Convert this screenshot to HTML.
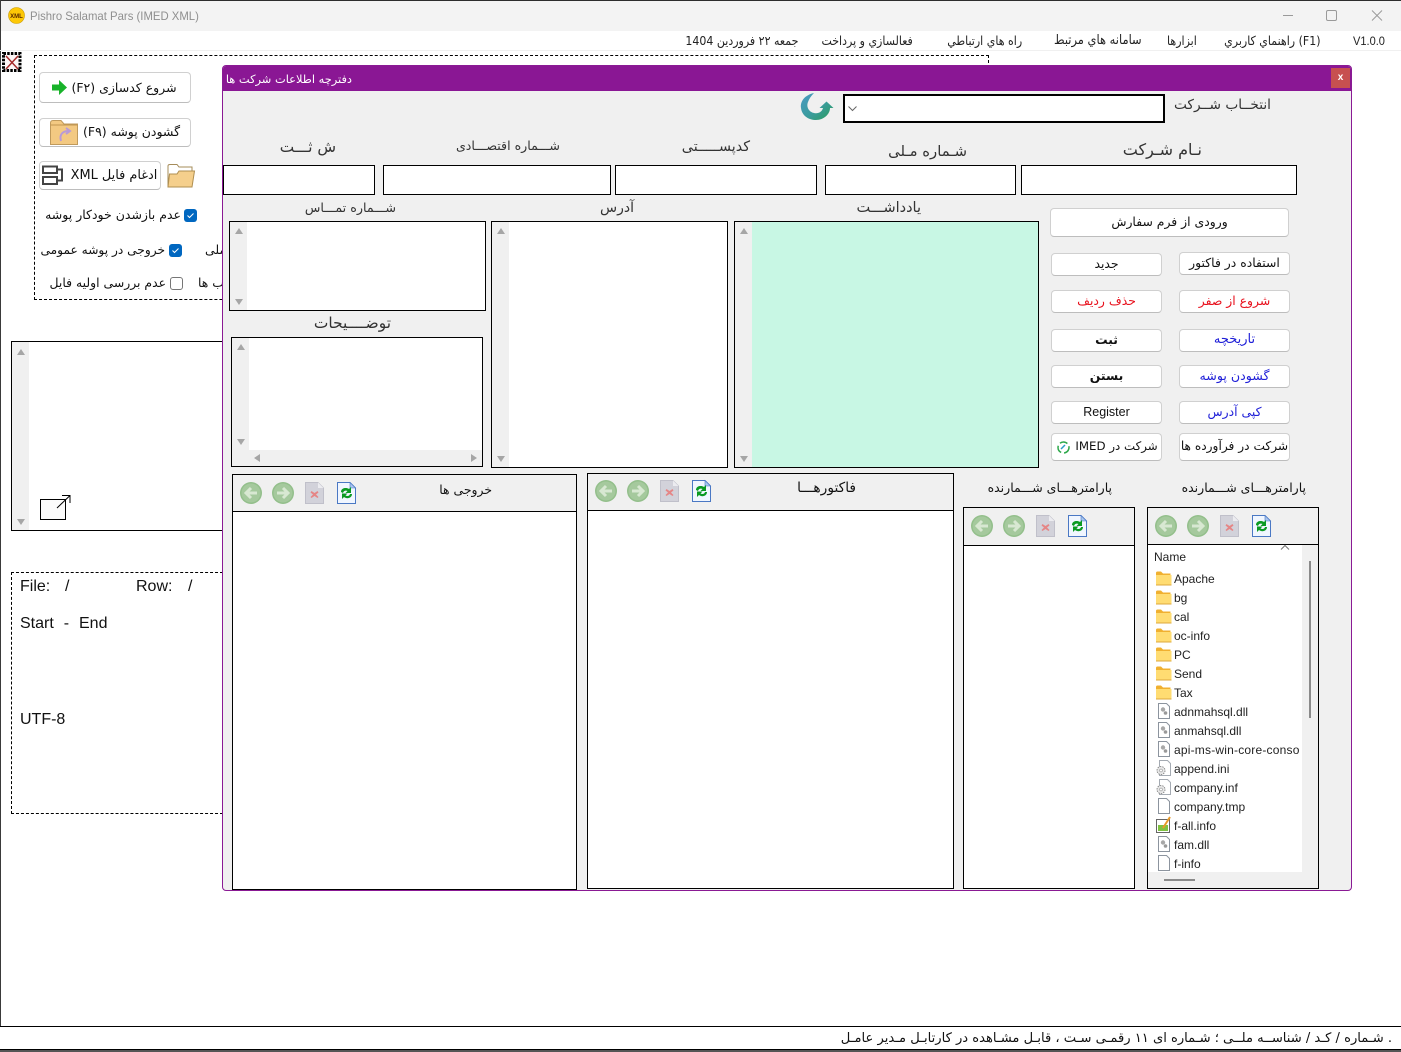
<!DOCTYPE html>
<html lang="fa"><head><meta charset="utf-8"><title>Pishro Salamat Pars</title>
<style>
html,body{margin:0;padding:0;width:1401px;height:1052px;overflow:hidden;background:#fff}
body{position:relative;font-family:"DejaVu Sans","Liberation Sans",sans-serif;color:#111}
.a{position:absolute;box-sizing:border-box}
.t{position:absolute;white-space:nowrap;line-height:16px;height:16px;direction:rtl;transform:translateY(-8px)}
.l{position:absolute;white-space:nowrap;line-height:16px;height:16px;font-family:"Liberation Sans",sans-serif;transform:translateY(-8px)}
.box{position:absolute;box-sizing:border-box;background:#fff;border:1px solid #000}
.sb{position:absolute;left:0;top:0;bottom:0;width:17px;background:#f0f0f0}
.btn{position:absolute;box-sizing:border-box;background:#fff;border:1px solid #d0d0d0;border-bottom-color:#bdbdbd;border-radius:4px;display:flex;align-items:center;justify-content:center;font-size:12.4px;direction:rtl;white-space:nowrap;color:#111;padding-bottom:2px}
.up,.dn,.lf,.rt{position:absolute;width:0;height:0}
.up{border-left:4px solid transparent;border-right:4px solid transparent;border-bottom:6px solid #a6a6a6}
.dn{border-left:4px solid transparent;border-right:4px solid transparent;border-top:6px solid #a6a6a6}
.lf{border-top:4px solid transparent;border-bottom:4px solid transparent;border-right:6px solid #a6a6a6}
.rt{border-top:4px solid transparent;border-bottom:4px solid transparent;border-left:6px solid #a6a6a6}
.f{position:absolute;left:1174px;font:12px/16px "Liberation Sans",sans-serif;color:#222;white-space:nowrap;transform:translateY(-7px)}
svg{position:absolute;overflow:visible}
.lab{color:#333}
.m{font-size:12.5px;color:#222;transform-origin:right center;transform:translateY(-8px) scaleX(.88)}
</style></head><body>
<svg width="0" height="0" style="left:0;top:0"><defs>
<g id="back"><circle cx="11" cy="11" r="11" fill="#93bf8b"/><circle cx="11" cy="11" r="9.500" fill="#a5c99d"/><path d="M17 11H6.500M11 6 6 11 11 16" fill="none" stroke="#d8e8d2" stroke-width="3"/></g>
<g id="fwd"><circle cx="11" cy="11" r="11" fill="#93bf8b"/><circle cx="11" cy="11" r="9.500" fill="#a5c99d"/><path d="M5 11H15.500M11 6 16 11 11 16" fill="none" stroke="#d8e8d2" stroke-width="3"/></g>
<g id="del"><path d="M.5.500H13L18.500 6V21.500H.5Z" fill="#d2d2da" stroke="#c0c0ca"/><path d="M13 .5V6H18.500Z" fill="#ececf0"/><path d="M6.500 9 9.500 11 12.500 9 13.500 10.500 11 12.500 13.500 15 12.500 16 9.500 14 6.500 16 5.500 15 8 12.500 5.500 10.500Z" fill="#e58686"/></g>
<g id="ref"><path d="M.5.500H13L18.500 6V21.500H.5Z" fill="#f0f6ff" stroke="#4a78c4"/><path d="M13 .5V6H18.500Z" fill="#a8c6ee" stroke="#4a78c4" stroke-width=".6"/><path d="M4 10C4 6 9 5 12 7L14 5V11H8.500L10.500 9C8.500 8 6.500 9 6 11Z" fill="#0a9a22"/><path d="M15 12C15 16 10 17.500 7 15L5 17V11.500H10.500L8.500 13.500C10.500 14.500 12.500 14 13 12Z" fill="#0a9a22"/></g>
<g id="fo"><path d="M1 2Q1 .5 2.500 .5H6L8 2.500H15.500V13H1Z" fill="#f0b030"/><path d="M1 4H16.500V14H1Z" fill="#ffdc72"/><path d="M1 14H16.500" stroke="#dca93e"/></g>
<g id="dll"><path d="M3.500.5H11.500L14.500 3.500V15.500H3.500Z" fill="#fff" stroke="#8c949e"/><circle cx="8" cy="6.500" r="2.200" fill="#a8a8a8"/><circle cx="10.500" cy="10" r="1.800" fill="#999"/></g>
<g id="ini"><path d="M4.500.5H12.500L15.500 3.500V15.500H4.500Z" fill="#fff" stroke="#a4aab2"/><circle cx="6" cy="10.500" r="4" fill="#e8e8e8" stroke="#8a8a8a" stroke-dasharray="1.500 1"/><circle cx="6" cy="10.500" r="1.400" fill="#fff" stroke="#999" stroke-width=".6"/></g>
<g id="tmp"><path d="M3.500.5H11.500L14.500 3.500V15.500H3.500Z" fill="#fff" stroke="#8c949e"/></g>
<linearGradient id="g" x1="0" y1="0" x2="1" y2="1"><stop offset="0" stop-color="#4a9ac4"/><stop offset=".55" stop-color="#3a9c9c"/><stop offset="1" stop-color="#2a9d58"/></linearGradient>
</defs></svg>

<!-- window chrome -->
<div class="a" style="left:0;top:0;width:1401px;height:31px;background:#f3f3f3;border-top:1px solid #2d2d2d"></div>
<div class="a" style="left:0;top:0;width:1px;height:1052px;background:#3a3a3a"></div>
<div class="a" style="left:0;top:1050px;width:1401px;height:2px;background:#555"></div>
<svg style="left:8px;top:7px" width="17" height="17"><circle cx="8.500" cy="8.500" r="8" fill="#fdc806" stroke="#c89a00" stroke-width=".6"/><text x="8.500" y="11" text-anchor="middle" font-size="6" font-family="Liberation Sans" fill="#5a2a00" font-weight="bold">XML</text></svg>
<div class="l" style="left:30px;top:16px;font-size:12px;color:#8f8f8f;transform-origin:left center;transform:translateY(-8px) scaleX(.945)">Pishro Salamat Pars (IMED XML)</div>
<svg style="left:1283px;top:10px" width="100" height="12"><path d="M0 5.500H10" stroke="#9a9a9a"/><rect x="43.500" y=".5" width="10" height="10" rx="1.500" fill="none" stroke="#9a9a9a"/><path d="M89 .5 99 10.500M99 .5 89 10.500" stroke="#9a9a9a"/></svg>
<div class="a" style="left:0;top:50px;width:1401px;height:1px;background:#f0f0f0"></div>

<!-- menu -->
<div class="l" style="left:1353px;top:41px;font-size:12px;color:#222;transform-origin:left center;transform:translateY(-8px) scaleX(.92)">V1.0.0</div>
<div class="t m" style="right:80px;top:41px">(F1) راهنماي كاربري</div>
<div class="t m" style="right:204px;top:41px">ابزارها</div>
<div class="t m" style="right:259px;top:41px;font-size:13px">سامانه هاي مرتبط</div>
<div class="t m" style="right:379px;top:41px">راه هاي ارتباطي</div>
<div class="t m" style="right:488px;top:41px">فعالسازي و پرداخت</div>
<div class="t m" style="right:603px;top:41px">جمعه ٢٢ فروردين 1404</div>

<!-- left panel -->
<svg style="left:2px;top:52px" width="20" height="20"><rect x="1.500" y="1.500" width="16.500" height="17" fill="#fdf6f6" stroke="#000" stroke-width="3" stroke-dasharray="2.500 1.200"/><path d="M4 4 16 17M16 4 4 17" stroke="#a52a2a" stroke-width="1.500"/></svg>
<div class="a" style="left:34px;top:55px;width:955px;height:245px;border:1px dashed #000"></div>
<div class="btn" style="left:39px;top:72px;width:152px;height:31px;font-size:12.500px;padding-left:18px;padding-bottom:1px">شروع کدسازی (F۲)</div>
<svg style="left:52px;top:80px" width="16" height="16"><path d="M0 4.500H7V0L15 7.500 7 15V10.500H0Z" fill="#18b32a"/></svg>
<div class="btn" style="left:39px;top:118px;width:152px;height:29px;font-size:12.500px;padding-left:33px">گشودن پوشه (F۹)</div>
<svg style="left:50px;top:120px" width="28" height="25"><path d="M.5 3Q.5.500 3 .5H11L14 4H27.500V24.500H.5Z" fill="#f3c982" stroke="#c09a5c"/><path d="M.5 5H27.500" stroke="#c09550"/><path d="M11 21C9 14 13 11 19 11M16 8 20 11 16 14" fill="none" stroke="#b99ad6" stroke-width="2"/></svg>
<div class="btn" style="left:39px;top:161px;width:122px;height:29px;font-size:12.900px;padding-left:28px;padding-bottom:0">ادغام فایل XML</div>
<svg style="left:42px;top:164px" width="22" height="23"><path d="M1 2.500H15V9H1ZM1 13H15V20H1ZM15 5.500H20V16.500H15" fill="none" stroke="#444" stroke-width="2"/></svg>
<svg style="left:167px;top:164px" width="28" height="24"><path d="M1 23V2Q1 .5 3 .5H10L12 3H25V23Z" fill="#fff" stroke="#a58c5a"/><path d="M1 23 2.500 10H10L12 7H27.500L25 23Z" fill="#f5cf8c" stroke="#b08f50"/></svg>

<div class="a" style="left:184px;top:209px;width:13px;height:13px;border-radius:3px;background:#0067c0"></div>
<svg style="left:184px;top:209px" width="13" height="13"><path d="M3.500 6.500 5.500 8.500 9.500 4.500" fill="none" stroke="#fff"/></svg>
<div class="t" style="right:1220px;top:215px;font-size:12.500px">عدم بازشدن خودکار پوشه</div>
<div class="a" style="left:169px;top:244px;width:13px;height:13px;border-radius:3px;background:#0067c0"></div>
<svg style="left:169px;top:244px" width="13" height="13"><path d="M3.500 6.500 5.500 8.500 9.500 4.500" fill="none" stroke="#fff"/></svg>
<div class="t" style="right:1236px;top:250px;font-size:12.200px">خروجی در پوشه عمومی</div>
<div class="t" style="left:205px;top:250px;font-size:12.400px;width:17px;overflow:hidden;direction:ltr">ملی</div>
<div class="a" style="left:170px;top:277px;width:13px;height:13px;border-radius:3px;background:#fff;border:1px solid #767676"></div>
<div class="t" style="right:1235px;top:283px;font-size:12.400px">عدم بررسی اولیه فایل</div>
<div class="t" style="left:198px;top:283px;font-size:12.400px;width:24px;overflow:hidden;direction:ltr">حساب ها</div>

<div class="box" style="left:11px;top:341px;width:212px;height:190px;border-width:1px"><div class="sb"></div><div class="up" style="left:5px;top:7px"></div><div class="dn" style="left:5px;bottom:5px"></div></div>
<svg style="left:40px;top:495px" width="32" height="26"><rect x=".5" y="4.500" width="25" height="20" fill="#fbfbfb" stroke="#000"/><path d="M17 13 29.500 1M22 .5H30V8" fill="none" stroke="#000"/></svg>

<div class="a" style="left:11px;top:572px;width:212px;height:242px;border:1px dashed #000"></div>
<div class="l" style="left:20px;top:587px;font-size:16px">File:</div><div class="l" style="left:65px;top:587px;font-size:16px">/</div>
<div class="l" style="left:136px;top:587px;font-size:16px">Row:</div><div class="l" style="left:188px;top:587px;font-size:16px">/</div>
<div class="l" style="left:20px;top:624px;font-size:16px;word-spacing:5.500px">Start - End</div>
<div class="l" style="left:20px;top:720px;font-size:16px">UTF-8</div>

<!-- modal -->
<div class="a" style="left:222px;top:65px;width:1130px;height:826px;background:#f0f0f0;border:1px solid #8a1a94;border-radius:4px;overflow:hidden"></div>
<div class="a" style="left:223px;top:66px;width:1128px;height:25px;background:#8a1794;border-radius:3px 3px 0 0"></div>
<div class="t" style="right:1049px;top:79px;font-size:11.400px;color:#fff">دفترچه اطلاعات شرکت ها</div>
<div class="a" style="left:1331px;top:68px;width:19px;height:20px;background:#c75050;color:#fff;font:bold 10px/20px 'Liberation Sans';text-align:center">x</div>

<svg style="left:800px;top:93px" width="34" height="29"><path d="M14 0C5 2 0 8 1 15 2 23 9 27 16 27 24 27 30 21 30 15H33.500L26.500 8.500 19.500 15H23C22 19 18 21 14 20 9 19 6 14 8 9 9 6 11 3 14 0Z" fill="url(#g)"/></svg>
<div class="a" style="left:843px;top:94px;width:322px;height:29px;background:#fff;border:2px solid #000"></div>
<svg style="left:848px;top:106px" width="9" height="6"><path d="M.5.500 4.500 4.500 8.500.5" fill="none" stroke="#666"/></svg>
<div class="t lab" style="right:130px;top:105px;font-size:13.700px">انتخــاب شــرکت</div>

<div class="t lab" style="right:199px;top:150px;font-size:16px">نـام شـرکت</div>
<div class="t lab" style="right:434px;top:152px;font-size:14.800px">شـماره مـلی</div>
<div class="t lab" style="right:651px;top:147px;font-size:14.300px">کدپســـــتی</div>
<div class="t lab" style="right:841px;top:146px;font-size:12.600px">شـــماره اقتصـــادی</div>
<div class="t lab" style="right:1065px;top:147px;font-size:15.300px">ش ثـــت</div>
<div class="box" style="left:1021px;top:165px;width:276px;height:30px"></div>
<div class="box" style="left:825px;top:165px;width:191px;height:30px"></div>
<div class="box" style="left:615px;top:165px;width:202px;height:30px"></div>
<div class="box" style="left:383px;top:165px;width:228px;height:30px"></div>
<div class="box" style="left:223px;top:165px;width:152px;height:30px"></div>

<div class="t lab" style="right:480px;top:208px;font-size:14.500px">یادداشـــت</div>
<div class="t lab" style="right:767px;top:208px;font-size:14px">آدرس</div>
<div class="t lab" style="right:1005px;top:208px;font-size:12.700px">شـــماره تمـــاس</div>
<div class="t lab" style="right:1010px;top:323px;font-size:15.400px">توضــــیحات</div>

<div class="box" style="left:734px;top:221px;width:305px;height:247px;background:#c8f7e4"><div class="sb"></div><div class="up" style="left:5px;top:6px"></div><div class="dn" style="left:5px;bottom:5px"></div></div>
<div class="box" style="left:491px;top:221px;width:237px;height:247px"><div class="sb"></div><div class="up" style="left:5px;top:6px"></div><div class="dn" style="left:5px;bottom:5px"></div></div>
<div class="box" style="left:229px;top:221px;width:257px;height:90px"><div class="sb"></div><div class="up" style="left:5px;top:6px"></div><div class="dn" style="left:5px;bottom:5px"></div></div>
<div class="box" style="left:231px;top:337px;width:252px;height:130px"><div class="sb"></div><div class="a" style="left:0;right:0;bottom:0;height:16px;background:#f0f0f0"></div><div class="up" style="left:5px;top:6px"></div><div class="dn" style="left:5px;bottom:21px"></div><div class="lf" style="left:22px;bottom:4px"></div><div class="rt" style="right:5px;bottom:4px"></div></div>

<!-- buttons -->
<div class="btn" style="left:1050px;top:208px;width:239px;height:29px">ورودی از فرم سفارش</div>
<div class="btn" style="left:1179px;top:252px;width:111px;height:23px">استفاده در فاکتور</div>
<div class="btn" style="left:1051px;top:253px;width:111px;height:23px">جدید</div>
<div class="btn" style="left:1179px;top:290px;width:111px;height:23px;color:#e8101c">شروع از صفر</div>
<div class="btn" style="left:1051px;top:290px;width:111px;height:23px;color:#e8101c">حذف ردیف</div>
<div class="btn" style="left:1179px;top:329px;width:111px;height:23px;color:#2020d8;font-size:13px">تاریخچه</div>
<div class="btn" style="left:1051px;top:329px;width:111px;height:23px;font-weight:bold">ثبت</div>
<div class="btn" style="left:1179px;top:365px;width:111px;height:23px;color:#2020d8;font-size:12.600px">گشودن پوشه</div>
<div class="btn" style="left:1051px;top:365px;width:111px;height:23px;font-weight:bold">بستن</div>
<div class="btn" style="left:1179px;top:401px;width:111px;height:23px;color:#2020d8">کپی آدرس</div>
<div class="btn" style="left:1051px;top:401px;width:111px;height:23px;font:12.500px 'Liberation Sans',sans-serif;direction:ltr">Register</div>
<div class="btn" style="left:1179px;top:433px;width:111px;height:28px;font-size:12.200px">شرکت در فرآورده ها</div>
<div class="btn" style="left:1051px;top:433px;width:111px;height:28px;padding-left:20px;font-size:11.800px">شرکت در IMED</div>
<svg style="left:1056px;top:440px" width="15" height="15"><circle cx="7.500" cy="7.500" r="5.500" fill="none" stroke="#2da84a" stroke-width="1.500" stroke-dasharray="8 3"/><path d="M5 9 9 5" stroke="#2a9dc4" stroke-width="1.500"/></svg>

<!-- panels -->
<div class="a" style="left:232px;top:474px;width:345px;height:416px;border:1px solid #000;background:#fff"><div class="a" style="left:0;top:0;right:0;height:37px;background:#f0f0f0;border-bottom:1px solid #000"></div></div>
<div class="a" style="left:587px;top:473px;width:367px;height:416px;border:1px solid #000;background:#fff"><div class="a" style="left:0;top:0;right:0;height:37px;background:#f0f0f0;border-bottom:1px solid #000"></div></div>
<div class="a" style="left:963px;top:507px;width:172px;height:382px;border:1px solid #000;background:#fff"><div class="a" style="left:0;top:0;right:0;height:38px;background:#f0f0f0;border-bottom:1px solid #000"></div></div>
<div class="a" style="left:1147px;top:507px;width:172px;height:382px;border:1px solid #000;background:#fff"><div class="a" style="left:0;top:0;right:0;height:37px;background:#f0f0f0;border-bottom:1px solid #000"></div><div class="a" style="right:0;top:37px;bottom:0;width:16px;background:#f0f0f0"></div><div class="a" style="left:0;right:0;bottom:0;height:16px;background:#f0f0f0"></div></div>
<div class="t" style="right:909px;top:490px;font-size:12.400px">خروجی ها</div>
<div class="t" style="right:545px;top:488px;font-size:13.800px">فاکتورهـــا</div>
<div class="t" style="right:289px;top:488px;font-size:12.500px">پارامترهـــای شـــمارنده</div>
<div class="t" style="right:95px;top:488px;font-size:12.500px">پارامترهـــای شـــمارنده</div>

<svg style="left:240px;top:482px" width="120" height="23"><use href="#back"/><use href="#fwd" x="32"/><use href="#del" x="65"/><use href="#ref" x="97"/></svg>
<svg style="left:595px;top:480px" width="120" height="23"><use href="#back"/><use href="#fwd" x="32"/><use href="#del" x="65"/><use href="#ref" x="97"/></svg>
<svg style="left:971px;top:515px" width="120" height="23"><use href="#back"/><use href="#fwd" x="32"/><use href="#del" x="65"/><use href="#ref" x="97"/></svg>
<svg style="left:1155px;top:515px" width="120" height="23"><use href="#back"/><use href="#fwd" x="32"/><use href="#del" x="65"/><use href="#ref" x="97"/></svg>

<!-- file list -->
<div class="f" style="left:1154px;top:556px">Name</div>
<svg style="left:1280px;top:545px" width="10" height="5"><path d="M1 4.500 5 .5 9 4.500" fill="none" stroke="#777"/></svg>
<div class="a" style="left:1309px;top:561px;width:2px;height:157px;background:#8a8a8a"></div>
<div class="a" style="left:1164px;top:879px;width:31px;height:2px;background:#8a8a8a"></div>
<svg style="left:1155px;top:571px" width="18" height="130"><use href="#fo"/><use href="#fo" y="19"/><use href="#fo" y="38"/><use href="#fo" y="57"/><use href="#fo" y="76"/><use href="#fo" y="95"/><use href="#fo" y="114"/></svg>
<svg style="left:1155px;top:703px" width="20" height="172"><use href="#dll"/><use href="#dll" y="19"/><use href="#dll" y="38"/><use href="#ini" y="57"/><use href="#ini" y="76"/><use href="#tmp" y="95"/><use href="#dll" y="133"/><use href="#tmp" y="152"/><g transform="translate(0,114)"><rect x="1.500" y="2.500" width="13" height="13" fill="#fff" stroke="#666"/><rect x="3" y="8" width="10" height="6" fill="#7fc241"/><path d="M8 11 15 0" stroke="#e89a2a" stroke-width="2"/></g></svg>
<div class="f" style="top:578px">Apache</div>
<div class="f" style="top:597px">bg</div>
<div class="f" style="top:616px">cal</div>
<div class="f" style="top:635px">oc-info</div>
<div class="f" style="top:654px">PC</div>
<div class="f" style="top:673px">Send</div>
<div class="f" style="top:692px">Tax</div>
<div class="f" style="top:711px">adnmahsql.dll</div>
<div class="f" style="top:730px">anmahsql.dll</div>
<div class="f" style="top:749px;width:127px;overflow:hidden;letter-spacing:.2px">api-ms-win-core-conso</div>
<div class="f" style="top:768px">append.ini</div>
<div class="f" style="top:787px">company.inf</div>
<div class="f" style="top:806px">company.tmp</div>
<div class="f" style="top:825px">f-all.info</div>
<div class="f" style="top:844px">fam.dll</div>
<div class="f" style="top:863px">f-info</div>

<!-- status -->
<div class="a" style="left:0;top:1026px;width:1401px;height:24px;background:#fff;border-top:1px solid #000;border-bottom:1px solid #000"></div>
<div class="t" style="right:9px;top:1039px;font-size:13.100px;color:#111">. شـماره / کـد / شناســه ملــی ؛ شـماره ای ۱۱ رقمـی سـت ، قابـل مشـاهده در کارتابـل مـدیر عامـل</div>
</body></html>
